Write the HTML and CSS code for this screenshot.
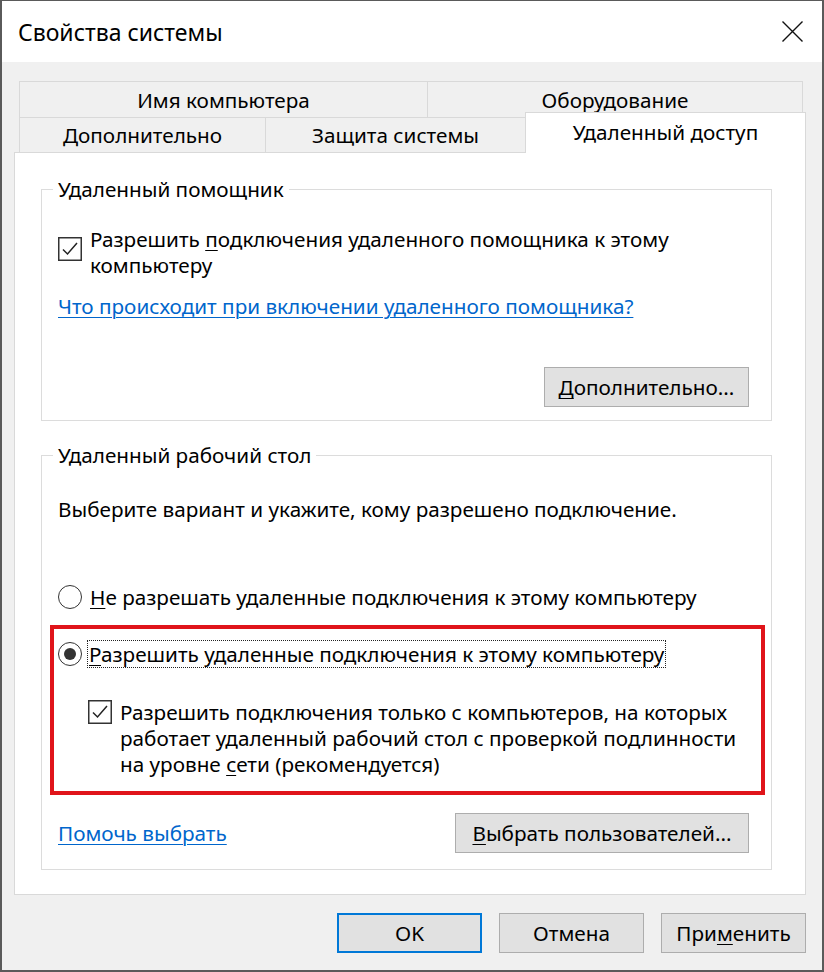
FILE: index.html
```html
<!DOCTYPE html>
<html lang="ru">
<head>
<meta charset="utf-8">
<title>Свойства системы</title>
<link rel="stylesheet" href="styles.css">
</head>
<body>
<div class="window">
  <div class="titlebar">
    <span class="title">Свойства системы</span>
    <span class="close" aria-label="Закрыть">
      <svg width="21" height="21" viewBox="0 0 21 21"><path d="M0.5 0.5 L20.5 20.5 M20.5 0.5 L0.5 20.5" stroke="#111" stroke-width="1.4" fill="none"/></svg>
    </span>
  </div>
  <div class="content">
    <div class="tabs">
      <div class="tab-row row1">
        <div class="tab tab-name">Имя компьютера</div>
        <div class="tab tab-hw">Оборудование</div>
      </div>
      <div class="tab-row row2">
        <div class="tab tab-adv">Дополнительно</div>
        <div class="tab tab-prot">Защита системы</div>
        <div class="tab tab-active">Удаленный доступ</div>
      </div>
    </div>
    <div class="panel">
      <fieldset class="group group-assist">
        <legend>Удаленный помощник</legend>
        <div class="group-body assist-body">
          <div class="check-row">
            <span class="checkbox">
              <svg width="24" height="24" viewBox="0 0 24 24"><rect x="0.75" y="0.75" width="22.5" height="22.5" fill="#fff" stroke="#333" stroke-width="1.5"/><path d="M5 12.5 L9.5 17 L19 6" stroke="#222" stroke-width="1.5" fill="none"/></svg>
            </span>
            <span class="check-text">Разрешить <u>п</u>одключения удаленного помощника к этому<br>компьютеру</span>
          </div>
          <a class="link link-assist" href="#">Что происходит при включении удаленного помощника?</a>
          <div class="btn-row">
            <span class="btn btn-adv"><u>Д</u>ополнительно...</span>
          </div>
        </div>
      </fieldset>
      <fieldset class="group group-rdp">
        <legend>Удаленный рабочий стол</legend>
        <div class="group-body rdp-body">
          <div class="hint">Выберите вариант и укажите, кому разрешено подключение.</div>
          <div class="radio-row radio-first">
            <span class="radio"></span>
            <span class="radio-text"><u>Н</u>е разрешать удаленные подключения к этому компьютеру</span>
          </div>
          <div class="highlight">
            <div class="radio-row">
              <span class="radio radio-on"></span>
              <span class="radio-text focused"><u>Р</u>азрешить удаленные подключения к этому компьютеру</span>
            </div>
            <div class="check-row nla-row">
              <span class="checkbox checkbox-nla">
                <svg width="24" height="24" viewBox="0 0 24 24"><rect x="0.75" y="0.75" width="22.5" height="22.5" fill="#fff" stroke="#333" stroke-width="1.5"/><path d="M5 12.5 L9.5 17 L19 6" stroke="#222" stroke-width="1.5" fill="none"/></svg>
              </span>
              <span class="check-text">Разрешить подключения только с компьютеров, на которых<br>работает удаленный рабочий стол с проверкой подлинности<br>на уровне <u>с</u>ети (рекомендуется)</span>
            </div>
          </div>
          <div class="bottom-row">
            <a class="link" href="#">Помочь выбрать</a>
            <span class="btn btn-users"><u>В</u>ыбрать пользователей...</span>
          </div>
        </div>
      </fieldset>
    </div>
    <div class="footer">
      <span class="btn btn-dlg btn-ok">OK</span>
      <span class="btn btn-dlg">Отмена</span>
      <span class="btn btn-dlg">При<u>м</u>енить</span>
    </div>
  </div>
</div>
</body>
</html>
```

FILE: styles.css
```css
* { box-sizing: border-box; }
html, body { margin: 0; padding: 0; }
body {
  width: 824px;
  height: 972px;
  background: #fff;
  font-family: "Noto Sans", "Open Sans", sans-serif;
  font-size: 20.7px;
  color: #000;
  overflow: hidden;
}
u { text-decoration-thickness: 1px; text-underline-offset: 3px; }

.window {
  width: 824px;
  height: 972px;
  border: 2px solid #5a5a5a;
  border-top-width: 1px;
  background: #f0f0f0;
  display: flex;
  flex-direction: column;
}

.titlebar {
  flex: none;
  height: 61px;
  background: #fff;
  display: flex;
  align-items: center;
  justify-content: space-between;
  padding: 0 19px 0 16px;
}
.title { font-size: 23px; line-height: 30px; }
.close { display: flex; width: 21px; height: 21px; }

.content {
  flex: 1;
  padding: 19px 16px 0 12px;
  display: flex;
  flex-direction: column;
}

.tab-row { display: flex; margin-left: 5px; }
.row1 { height: 36px; }
.row2 { height: 35px; }
.tab {
  border: 1px solid #d9d9d9;
  border-bottom: none;
  background: #f0f0f0;
  display: flex;
  align-items: center;
  justify-content: center;
  white-space: nowrap;
}
.tab-name { width: 409px; }
.tab-hw { width: 376px; margin-left: -1px; }
.tab-adv { width: 247px; }
.tab-prot { width: 261px; margin-left: -1px; }
.tab-active {
  width: 281px;
  margin-left: -1px;
  margin-top: -5px;
  height: 41px;
  background: #fff;
  position: relative;
  z-index: 1;
  padding-bottom: 2px;
}

.panel {
  flex: none;
  height: 743px;
  background: #fff;
  border: 1px solid #d9d9d9;
  padding: 23px 33px 0 26px;
}

.group {
  border: 1px solid #dcdcdc;
  margin: 0;
  padding: 0;
  min-width: 0;
}
.group legend {
  margin-left: 11px;
  padding: 0 5px;
  line-height: 26px;
}
.group-rdp { margin-top: 21px; }

.group-body { display: flex; flex-direction: column; align-items: flex-start; }
.assist-body { padding: 24px 22px 13px 16px; }
.rdp-body { padding: 28px 22px 16px 16px; }

.check-row { display: flex; align-items: flex-start; gap: 8px; line-height: 26px; white-space: nowrap; }
.checkbox { display: flex; width: 24px; height: 24px; margin-top: 11px; flex: none; }
.checkbox-nla { margin-top: 1px; }
.nla-row { margin-top: 32px; margin-left: 30px; }

.link {
  color: #0066cc;
  text-decoration: underline;
  text-decoration-thickness: 1px;
  text-underline-offset: 3px;
  line-height: 26px;
  white-space: nowrap;
}
.link-assist { margin-top: 15px; }

.btn-row { align-self: stretch; display: flex; justify-content: flex-end; margin-top: 48px; }
.btn {
  height: 40px;
  background: #e1e1e1;
  border: 1px solid #adadad;
  display: flex;
  align-items: center;
  justify-content: center;
  white-space: nowrap;
}
.btn-adv { width: 205px; }
.btn-users { width: 294px; }

.hint { line-height: 26px; white-space: nowrap; }
.radio-row { display: flex; align-items: center; gap: 8px; line-height: 26px; white-space: nowrap; }
.radio-first { margin-top: 62px; }
.radio {
  width: 24px;
  height: 24px;
  border: 1.5px solid #333;
  border-radius: 50%;
  background: #fff;
  flex: none;
  display: flex;
  align-items: center;
  justify-content: center;
}
.radio-on::after {
  content: "";
  width: 12px;
  height: 12px;
  border-radius: 50%;
  background: #333;
}
.focused { outline: 1px dotted #222; outline-offset: 0; padding: 0 1px; margin-left: -2px; }

.highlight {
  align-self: stretch;
  margin: 15px -16px 0 -8px;
  border: 4px solid #e0141a;
  padding: 12px 4px 14px 4px;
}

.bottom-row {
  align-self: stretch;
  display: flex;
  align-items: center;
  justify-content: space-between;
  margin-top: 18px;
}

.footer {
  display: flex;
  justify-content: flex-end;
  gap: 17px;
  margin-top: 18px;
}
.btn-dlg { width: 145px; }
.btn-ok { border: 2px solid #0078d7; }
```
